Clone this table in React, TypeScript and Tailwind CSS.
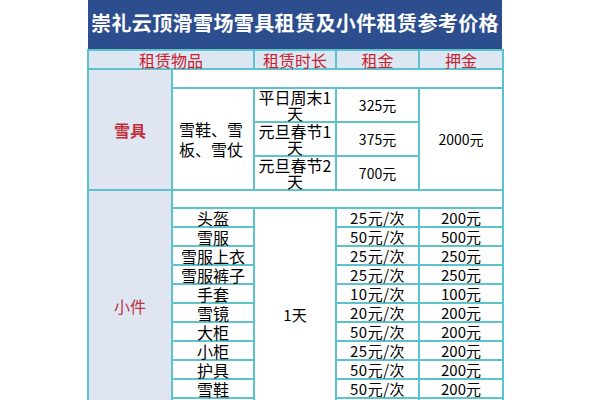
const cell = 'border-2 border-[#5cc3cb] p-0 text-center align-middle';

const items: { name: string; rent: string; deposit: string }[] = [
  { name: '头盔', rent: '25元/次', deposit: '200元' },
  { name: '雪服', rent: '50元/次', deposit: '500元' },
  { name: '雪服上衣', rent: '25元/次', deposit: '250元' },
  { name: '雪服裤子', rent: '25元/次', deposit: '250元' },
  { name: '手套', rent: '10元/次', deposit: '100元' },
  { name: '雪镜', rent: '20元/次', deposit: '200元' },
  { name: '大柜', rent: '50元/次', deposit: '200元' },
  { name: '小柜', rent: '25元/次', deposit: '200元' },
  { name: '护具', rent: '50元/次', deposit: '200元' },
  { name: '雪鞋', rent: '50元/次', deposit: '200元' },
  { name: '雪杖', rent: '20元/次', deposit: '200元' },
];

// duration text wraps after the digit in the original sheet
const gear = [
  { time: '平日周末1', rest: '天', price: '325元' },
  { time: '元旦春节1', rest: '天', price: '375元' },
  { time: '元旦春节2', rest: '天', price: '700元' },
];

export default function App() {
  return (
    <div
      className="h-[400px] w-[600px] overflow-hidden bg-white"
      style={{ fontFamily: '"Noto Sans CJK SC", "Noto Sans", sans-serif' }}
    >
      <div className="ml-[88px] flex h-[49px] w-[414px] items-center justify-center bg-[#2c4d8e] pb-[3px] text-[20px] font-bold tracking-[0.4px] text-white">
        崇礼云顶滑雪场雪具租赁及小件租赁参考价格
      </div>
      <table className="ml-[87px] w-[415px] table-fixed border-collapse text-black">
        <colgroup>
          <col className="w-[84px]" />
          <col className="w-[82px]" />
          <col className="w-[82px]" />
          <col className="w-[83px]" />
          <col className="w-[84px]" />
        </colgroup>
        <tbody>
          <tr className="h-[19px] bg-[#dde7f3] text-[16px] leading-[16px] text-[#c8212b]">
            <td colSpan={2} className={cell}>租赁物品</td>
            <td className={cell}>租赁时长</td>
            <td className={cell}>租金</td>
            <td className={cell}>押金</td>
          </tr>
          <tr className="h-[19px]">
            <td rowSpan={4} className={`${cell} bg-[#dfe6f2] text-[16px] font-bold text-[#c0303a]`}>雪具</td>
            <td colSpan={4} className={cell}></td>
          </tr>
          {gear.map((g, i) => (
            <tr key={g.time} className="h-[34px]">
              {i === 0 && (
                <td rowSpan={3} className={`${cell} px-[6px] text-left text-[16px] leading-[20px]`}>
                  雪鞋、雪板、雪仗
                </td>
              )}
              <td className={`${cell} whitespace-nowrap text-[16px] leading-[16px]`}>
                {g.time}
                <br />
                {g.rest}
              </td>
              <td className={`${cell} text-[14px]`}>{g.price}</td>
              {i === 0 && (
                <td rowSpan={3} className={`${cell} text-[14px]`}>2000元</td>
              )}
            </tr>
          ))}
          <tr className="h-[18px]">
            <td rowSpan={items.length + 1} className={`${cell} bg-[#dfe6f2] pt-[4px] text-[16px] text-[#b83440]`}>小件</td>
            <td colSpan={4} className={cell}></td>
          </tr>
          {items.map((it, i) => (
            <tr key={it.name} className="h-[19px] text-[16px] leading-[16px]">
              <td className={cell}>{it.name}</td>
              {i === 0 && (
                <td rowSpan={items.length} className={`${cell} pt-[4px] text-[15px]`}>1天</td>
              )}
              <td className={`${cell} text-[15px] tracking-[0.5px]`}>{it.rent}</td>
              <td className={`${cell} text-[15px]`}>{it.deposit}</td>
            </tr>
          ))}
        </tbody>
      </table>
    </div>
  );
}
